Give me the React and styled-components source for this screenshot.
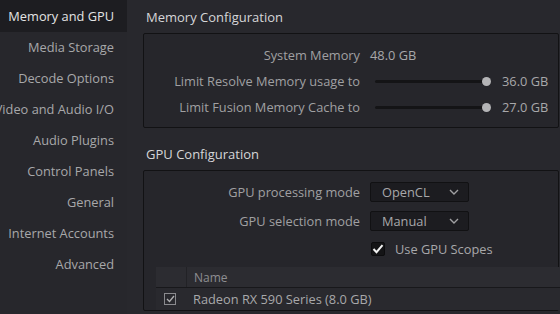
import React from 'react'
import styled, { createGlobalStyle } from 'styled-components'

const Global = createGlobalStyle`
    html, body {
        margin: 0;
        padding: 0;
        background: #28282d;
        overflow: hidden;
    }
    body {
        font-family: 'Open Sans', 'Noto Sans', sans-serif;
        font-size: 12.8px;
        -webkit-font-smoothing: antialiased;
    }
`

const Page = styled.div`
    display: flex;
    width: 560px;
    height: 314px;
    overflow: hidden;
`

const Sidebar = styled.nav`
    width: 127px;
    flex-shrink: 0;
    background: #27272c;
    display: flex;
    flex-direction: column;
    overflow: hidden;
`

const NavItem = styled.div`
    height: 31px;
    line-height: 31px;
    padding-right: 13px;
    text-align: right;
    white-space: nowrap;
    color: ${p => p.active ? '#e4e4e4' : '#a8a8aa'};
    background: ${p => p.active ? '#1d1d21' : 'transparent'};
    display: flex;
    justify-content: flex-end;
    &:first-child {
        height: 32px;
        line-height: 32px;
    }
`

const Main = styled.main`
    flex: 1;
    padding: 5px 0 0 16px;
    display: flex;
    flex-direction: column;
    min-width: 0;
`

const SectionTitle = styled.h2`
    margin: ${p => p.top || '0'} 0 4px 3px;
    font-size: 13px;
    font-weight: 400;
    color: #d6d6d8;
    line-height: 24px;
`

const Box = styled.section`
    border: 1px solid #121214;
    border-radius: 2px;
    background: #26262b;
    margin-right: 1px;
    padding: ${p => p.pad};
    display: flex;
    flex-direction: column;
    gap: ${p => p.gap};
`

const Row = styled.div`
    display: grid;
    grid-template-columns: 216px 1fr;
    column-gap: 10px;
    align-items: center;
    height: ${p => p.h || '20px'};
`

const Label = styled.span`
    text-align: right;
    color: #a0a0a2;
    white-space: nowrap;
`

const Value = styled.span`
    color: #a8a8aa;
    white-space: nowrap;
`

const SliderWrap = styled.div`
    display: flex;
    align-items: center;
`

const Track = styled.div`
    position: relative;
    width: 112px;
    height: 3px;
    margin-left: 5px;
    background: #141416;
    border-radius: 2px;
`

const Thumb = styled.div`
    position: absolute;
    top: -3px;
    right: -4px;
    width: 9px;
    height: 9px;
    border-radius: 50%;
    background: #b4b4b6;
`

const SliderValue = styled.span`
    margin-left: 15px;
    color: #a8a8aa;
`

const Select = styled.div`
    width: 99px;
    height: 20px;
    box-sizing: border-box;
    background: #1c1c20;
    border: 1px solid #111113;
    border-radius: 2px;
    display: flex;
    align-items: center;
    justify-content: space-between;
    padding: 0 9px 0 11px;
    color: #a8a8aa;
`

const Check = styled.div`
    width: 14px;
    height: 14px;
    box-sizing: border-box;
    background: #141416;
    border: 1px solid #0c0c0e;
    border-radius: 2px;
    display: flex;
    align-items: center;
    justify-content: center;
`

const CheckLabel = styled.label`
    display: flex;
    align-items: center;
    gap: 10px;
    color: #a8a8aa;
    margin-left: 1px;
`

const Table = styled.div`
    margin: 0 -2px 0 12px;
    display: flex;
    flex-direction: column;
`

const TableRow = styled.div`
    display: grid;
    grid-template-columns: 30px 1fr;
    height: ${p => p.header ? '20px' : '21px'};
    background: ${p => p.header ? '#2c2c31' : '#29292e'};
    border-bottom: 1px solid ${p => p.header ? '#18181b' : 'transparent'};
    align-items: center;
`

const Cell = styled.div`
    height: 100%;
    display: flex;
    align-items: center;
    padding-left: ${p => p.first ? '8px' : '7px'};
    border-left: ${p => p.divider ? '1px solid #222226' : 'none'};
    color: ${p => p.header ? '#8e8e92' : '#a8a8aa'};
    font-size: ${p => p.header ? '12px' : '12.8px'};
    white-space: nowrap;
`

const SmallCheck = styled.div`
    width: 12px;
    height: 12px;
    box-sizing: border-box;
    border: 1px solid #8a8a8e;
    display: flex;
    align-items: center;
    justify-content: center;
`

function Chevron() {
    return (
        <svg width="10" height="6" viewBox="0 0 10 6">
            <path d="M1 1 L5 5 L9 1" fill="none" stroke="#a0a0a2" strokeWidth="1.4" />
        </svg>
    )
}

function Slider({ value }) {
    return (
        <SliderWrap>
            <Track><Thumb /></Track>
            <SliderValue>{value}</SliderValue>
        </SliderWrap>
    )
}

const navItems = [
    'Memory and GPU',
    'Media Storage',
    'Decode Options',
    'Video and Audio I/O',
    'Audio Plugins',
    'Control Panels',
    'General',
    'Internet Accounts',
    'Advanced',
]

export default function App() {
    return (
        <Page>
            <Global />
            <Sidebar>
                {navItems.map((n, i) => (
                    <NavItem key={n} active={i === 0}>{n}</NavItem>
                ))}
            </Sidebar>
            <Main>
                <SectionTitle>Memory Configuration</SectionTitle>
                <Box pad="11px 0 10px 0" gap="6px">
                    <Row>
                        <Label>System Memory</Label>
                        <Value>48.0 GB</Value>
                    </Row>
                    <Row>
                        <Label>Limit Resolve Memory usage to</Label>
                        <Slider value="36.0 GB" />
                    </Row>
                    <Row>
                        <Label>Limit Fusion Memory Cache to</Label>
                        <Slider value="27.0 GB" />
                    </Row>
                </Box>
                <SectionTitle top="14px">GPU Configuration</SectionTitle>
                <Box pad="11px 0 0 0" gap="9px">
                    <Row>
                        <Label>GPU processing mode</Label>
                        <Select>OpenCL<Chevron /></Select>
                    </Row>
                    <Row>
                        <Label>GPU selection mode</Label>
                        <Select>Manual<Chevron /></Select>
                    </Row>
                    <Row h="18px">
                        <span />
                        <CheckLabel>
                            <Check>
                                <svg width="12" height="10" viewBox="0 0 12 10">
                                    <path d="M1.5 5 L4.5 8.2 L10.5 1.2" fill="none" stroke="#f2f2f2" strokeWidth="2" />
                                </svg>
                            </Check>
                            Use GPU Scopes
                        </CheckLabel>
                    </Row>
                    <Table>
                        <TableRow header>
                            <Cell header />
                            <Cell header divider>Name</Cell>
                        </TableRow>
                        <TableRow>
                            <Cell first>
                                <SmallCheck>
                                    <svg width="9" height="8" viewBox="0 0 9 8">
                                        <path d="M1 4 L3.5 6.5 L8 1" fill="none" stroke="#b0b0b2" strokeWidth="1.3" />
                                    </svg>
                                </SmallCheck>
                            </Cell>
                            <Cell>Radeon RX 590 Series (8.0 GB)</Cell>
                        </TableRow>
                    </Table>
                </Box>
            </Main>
        </Page>
    )
}
